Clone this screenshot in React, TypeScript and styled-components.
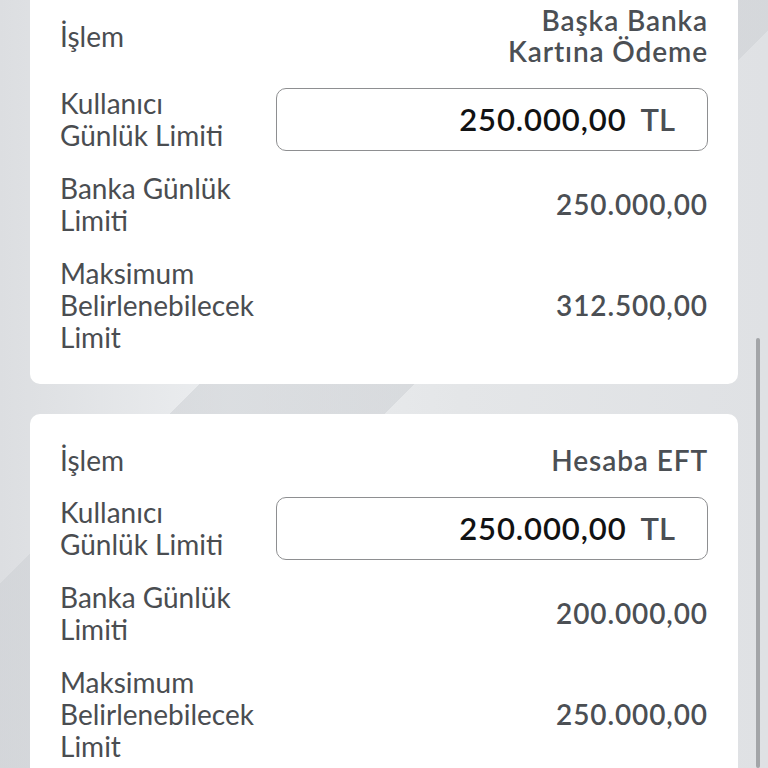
import React from 'react';
import styled, { createGlobalStyle } from 'styled-components';

const GlobalStyle = createGlobalStyle`
  html, body {
    margin: 0;
    padding: 0;
    height: 100%;
  }
  body {
    font-family: Lato, "Open Sans", "DejaVu Sans", sans-serif;
    background-color: #e9ebed;
    background-image:
      linear-gradient(135deg, transparent 0 38%, rgba(205, 208, 212, 0.55) 38% 52%, transparent 52%),
      linear-gradient(90deg, #dcdee1 0%, #eceef0 30%, #e4e6e8 60%, #dfe1e4 100%);
    overflow: hidden;
  }
`;

const Page = styled.div`
  position: relative;
  height: 768px;
  overflow: hidden;
  padding: 0 30px;
`;

const List = styled.div`
  display: flex;
  flex-direction: column;
  gap: 30px;
  margin-top: -25px;
`;

const Card = styled.section`
  background: #ffffff;
  border-radius: 10px;
  padding: 30px 30px 31px;
  display: flex;
  flex-direction: column;
  gap: 21px;
`;

const Row = styled.div<{ $tight?: boolean }>`
  display: grid;
  grid-template-columns: 1fr 2fr;
  align-items: center;
  margin-bottom: ${(p) => (p.$tight ? '-1px' : '0')};
`;

const Label = styled.div`
  font-size: 28px;
  line-height: 32px;
  color: #4a4d51;
  font-weight: 400;
`;

const Value = styled.div`
  text-align: right;
  font-size: 28px;
  line-height: 31px;
  letter-spacing: 0.9px;
  color: #4b4f54;
  font-weight: 600;
`;

const AmountBox = styled.div`
  height: 63px;
  box-sizing: border-box;
  border: 1.5px solid #8e8f91;
  border-radius: 10px;
  display: flex;
  align-items: center;
  justify-content: flex-end;
  gap: 14px;
  padding-right: 32px;
`;

const Amount = styled.span`
  font-size: 31px;
  font-weight: 600;
  letter-spacing: 0.9px;
  color: #111213;
`;

const Currency = styled.span`
  font-size: 31px;
  font-weight: 600;
  color: #4b4f54;
`;

const ScrollThumb = styled.div`
  position: absolute;
  right: 8px;
  top: 338px;
  bottom: 0;
  width: 4px;
  border-radius: 2px;
  background: #a3a5a8;
`;

type Limit = {
  islem: string[];
  user: string;
  bank: string;
  max: string;
};

const limits: Limit[] = [
  { islem: ['Başka Banka', 'Kartına Ödeme'], user: '250.000,00', bank: '250.000,00', max: '312.500,00' },
  { islem: ['Hesaba EFT'], user: '250.000,00', bank: '200.000,00', max: '250.000,00' },
];

const Lines: React.FC<{ lines: string[] }> = ({ lines }) => (
  <>
    {lines.map((l, i) => (
      <div key={i}>{l}</div>
    ))}
  </>
);

const LimitCard: React.FC<{ item: Limit }> = ({ item }) => (
  <Card>
    <Row $tight>
      <Label>İşlem</Label>
      <Value>
        <Lines lines={item.islem} />
      </Value>
    </Row>
    <Row>
      <Label>
        <Lines lines={['Kullanıcı', 'Günlük Limiti']} />
      </Label>
      <AmountBox>
        <Amount>{item.user}</Amount>
        <Currency>TL</Currency>
      </AmountBox>
    </Row>
    <Row>
      <Label>
        <Lines lines={['Banka Günlük', 'Limiti']} />
      </Label>
      <Value>{item.bank}</Value>
    </Row>
    <Row>
      <Label>
        <Lines lines={['Maksimum', 'Belirlenebilecek', 'Limit']} />
      </Label>
      <Value>{item.max}</Value>
    </Row>
  </Card>
);

const App: React.FC = () => (
  <Page>
    <GlobalStyle />
    <List>
      {limits.map((l, i) => (
        <LimitCard key={i} item={l} />
      ))}
    </List>
    <ScrollThumb />
  </Page>
);

export default App;
